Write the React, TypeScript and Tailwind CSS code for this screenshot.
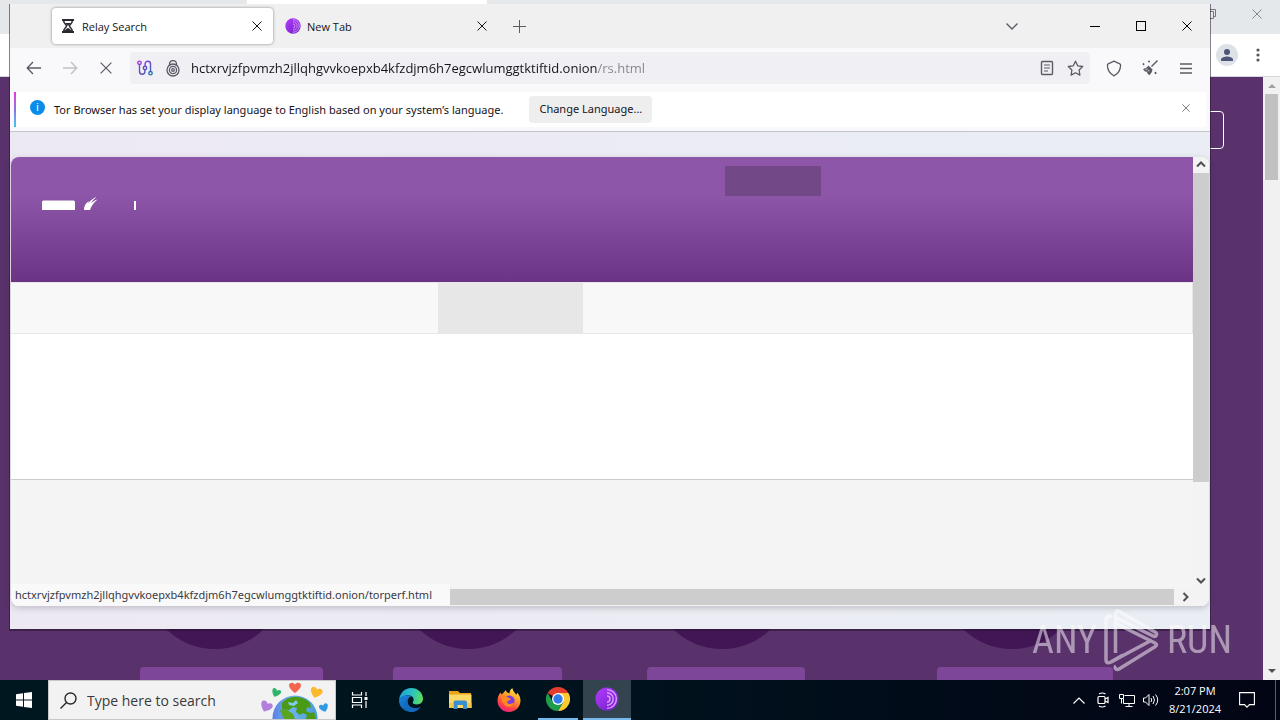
import type { ReactNode } from 'react';

const HOST = 'hctxrvjzfpvmzh2jllqhgvvkoepxb4kfzdjm6h7egcwlumggtktiftid.onion';

const cards = [
  { id: 1, column: 'w-[253px]', button: 'w-[183px]' },
  { id: 2, column: 'w-[254px]', button: 'w-[169px]' },
  { id: 3, column: 'w-[290px]', button: 'w-[158px]' },
  { id: 4, column: 'w-[176px]', button: 'w-[176px]' },
];

/* ---------- icons ---------- */

function Cross({ size = 10, width = 1 }: { size?: number; width?: number }) {
  return (
    <svg width={size} height={size} viewBox="0 0 10 10" fill="none" stroke="currentColor" strokeWidth={width}>
      <path d="M.5.5l9 9M9.5.5l-9 9" />
    </svg>
  );
}

function Chevron({ className = '', width = 2 }: { className?: string; width?: number }) {
  return (
    <svg width="10" height="10" viewBox="0 0 10 10" fill="none" stroke="currentColor" strokeWidth={width} className={className}>
      <path d="M1 6.5l4-4 4 4" />
    </svg>
  );
}

function Arrow({ className = '' }: { className?: string }) {
  return (
    <svg width="16" height="16" viewBox="0 0 16 16" fill="none" stroke="currentColor" strokeWidth="1.3" className={className}>
      <path d="M15 8H1.5M7 2L1.2 8 7 14" />
    </svg>
  );
}

function Hourglass() {
  return (
    <svg width="14" height="16" viewBox="0 0 14 16">
      <path d="M1 1h12v2H1zM1 13h12v2H1z" fill="#2b2a33" />
      <path d="M2.7 3c0 2.6 2.8 3.6 2.8 5s-2.8 2.4-2.8 5h8.6c0-2.6-2.8-3.6-2.8-5s2.8-2.4 2.8-5" fill="none" stroke="#2b2a33" strokeWidth="1.5" />
      <path d="M4 5h6L7 8zM4 13c0-2 3-3 3-3s3 1 3 3z" fill="#2b2a33" />
    </svg>
  );
}

function TorLogo({ size }: { size: number }) {
  return (
    <svg width={size} height={size} viewBox="0 0 24 24">
      <defs>
        <linearGradient id="torFill" x1="0" y1="0" x2="1" y2="1">
          <stop offset="0" stopColor="#b63bff" />
          <stop offset="1" stopColor="#6a1fc4" />
        </linearGradient>
      </defs>
      <circle cx="12" cy="12" r="11.5" fill="url(#torFill)" />
      <g fill="none" stroke="#dd9cff" strokeWidth="1.4">
        <path d="M12 2.6a9.4 9.4 0 0 1 0 18.8" />
        <path d="M12 5.8a6.2 6.2 0 0 1 0 12.4" />
        <path d="M12 9a3 3 0 0 1 0 6" />
      </g>
    </svg>
  );
}

function Circuit() {
  return (
    <svg width="16" height="16" viewBox="0 0 16 16" fill="none" strokeWidth="1.4">
      <defs>
        <linearGradient id="circuit" x1="0" y1="0" x2="16" y2="16" gradientUnits="userSpaceOnUse">
          <stop offset="0" stopColor="#b832e8" />
          <stop offset=".55" stopColor="#5a4fc0" />
          <stop offset="1" stopColor="#1884b8" />
        </linearGradient>
      </defs>
      <g stroke="url(#circuit)">
        <circle cx="2.5" cy="2.8" r="1.7" />
        <circle cx="8" cy="8" r="1.7" />
        <circle cx="13.5" cy="13.2" r="1.7" />
        <path d="M2.5 4.5v7a2.7 2.7 0 0 0 5.4 0V9.7M8.1 6.3V4a2.7 2.7 0 0 1 5.4 0v7.5" />
      </g>
    </svg>
  );
}

function OnionLock() {
  return (
    <svg width="14" height="17" viewBox="0 0 14 17" fill="none" stroke="#5b5b66" strokeWidth="1.3">
      <path d="M3.5 6V4a3.5 3.5 0 0 1 7 0v2" />
      <circle cx="7" cy="10" r="6" />
      <circle cx="7" cy="10" r="3.6" />
      <circle cx="7" cy="10" r="1.3" />
    </svg>
  );
}

function Reader() {
  return (
    <svg width="14" height="16" viewBox="0 0 14 16" fill="none" stroke="currentColor" strokeWidth="1.4">
      <rect x="1.5" y="1.5" width="11" height="13" rx="1" />
      <path d="M4 5h6M4 8h6M4 11h4" strokeWidth="1.1" />
    </svg>
  );
}

function Star() {
  return (
    <svg width="17" height="17" viewBox="0 0 17 17" fill="none" stroke="currentColor" strokeWidth="1.3" strokeLinejoin="round">
      <path d="M8.5 1.2l2.2 4.6 5 .7-3.6 3.5.8 5.1-4.4-2.4-4.4 2.4.8-5.1L1.3 6.5l5-.7z" />
    </svg>
  );
}

function Shield() {
  return (
    <svg width="16" height="17" viewBox="0 0 16 17" fill="none" stroke="currentColor" strokeWidth="1.3" strokeLinejoin="round">
      <path d="M8 1.2l5.8 2.6c.6.3.8.7.8 1.3C14.5 10 12 14 8 15.8 4 14 1.5 10 1.4 5.1c0-.6.2-1 .8-1.3z" />
    </svg>
  );
}

function Broom() {
  return (
    <svg width="16" height="16" viewBox="0 0 16 16" fill="none" stroke="currentColor">
      <path d="M15.5.5L9.5 6.5" strokeWidth="1.4" />
      <path d="M6.5 5.5l4 4c-.3 2.5-1.5 4.3-3.2 5.7L5.5 13.5l-.7-1.7-1.8-.2L1 9.2C3 8 4.7 8.3 6.5 5.5z" fill="currentColor" stroke="none" />
      <path d="M3.5 9.5l2-.5M6 11.5l1-1.5" stroke="#f9f9fb" strokeWidth=".8" />
      <path d="M7 .5v2M6 1.5h2M1.5 3.2v2M.5 4.2h2M13.5 11.8v2.4M12.3 13h2.4" strokeWidth="1" />
    </svg>
  );
}

function Heart({ x, y, turn, fill }: { x: number; y: number; turn: number; fill: string }) {
  return (
    <path
      d="M0 5C-3 3-6 0-6-2.7-6-5.5-2-6.5 0-3.5 2-6.5 6-5.5 6-2.7 6 0 3 3 0 5z"
      transform={`translate(${x} ${y}) rotate(${turn})`}
      fill={fill}
    />
  );
}

function SmallHeart({ x, y, turn, fill }: { x: number; y: number; turn: number; fill: string }) {
  return (
    <path
      d="M0 4C-2 3-4.5 0-4.5-2-4.5-4.5-1.5-5 0-2.5 1.5-5 4.5-4.5 4.5-2 4.5 0 2 3 0 4z"
      transform={`translate(${x} ${y}) rotate(${turn})`}
      fill={fill}
    />
  );
}

function EarthArt() {
  return (
    <svg width="70" height="38" viewBox="0 0 70 38" className="shrink-0">
      <defs>
        <linearGradient id="sea" x1="0" y1="0" x2="1" y2="0">
          <stop offset="0" stopColor="#5b7fe6" />
          <stop offset=".4" stopColor="#6db4ee" />
          <stop offset="1" stopColor="#4a9bd8" />
        </linearGradient>
      </defs>
      <circle cx="35" cy="37" r="22.5" fill="url(#sea)" />
      <path d="M22 22c4-5 10-7 16-6 5 .5 9 3 12 6l1 5-4-1-1 4 4 2 4-1 2 7H46l1-4-4-2-3 2-4-3 1-4-4-1-4 3-7-1z" fill="#4a9a16" />
      <path d="M20 29l6-1 7 5 2 5H24z" fill="#5aa51e" />
      <path d="M28 21l5 1 3-3 2 3-4 3-5-1z" fill="#83cbea" />
      <Heart x={35} y={7} turn={0} fill="#f4654f" />
      <SmallHeart x={16} y={12} turn={22} fill="#2fb56b" />
      <Heart x={56} y={12} turn={18} fill="#fdb92c" />
      <Heart x={6} y={26} turn={25} fill="#b180dc" />
      <SmallHeart x={64} y={27} turn={-18} fill="#2f9ae3" />
    </svg>
  );
}

function Edge() {
  return (
    <svg width="24" height="24" viewBox="0 0 24 24">
      <defs>
        <linearGradient id="edgeTop" x1="0" y1=".3" x2="1" y2=".5">
          <stop offset="0" stopColor="#1c9fe0" />
          <stop offset=".6" stopColor="#2fc6b5" />
          <stop offset="1" stopColor="#5fdc5a" />
        </linearGradient>
        <linearGradient id="edgeLow" x1="0" y1="0" x2="1" y2="1">
          <stop offset="0" stopColor="#1a86dc" />
          <stop offset="1" stopColor="#0c4f9e" />
        </linearGradient>
      </defs>
      <path d="M0 12.5C.5 5.3 5.5 0 12.2 0 19 0 24 5 24 10.8c0 3.5-2.7 5.7-6 5.7-2.8 0-4.3-1-4.3-2 0-.6 1-1.2 1-2.9 0-2.2-2.2-4.4-5.6-4.4C4.5 7.2 1 9.5 0 12.5z" fill="url(#edgeTop)" />
      <path d="M0 12.5c.9-3.1 4.3-5.3 8.9-5.3 1.5 0 2.8.4 3.8 1.1-3 .5-4.2 3-4.2 5.2 0 4.5 4.2 6.7 7.7 6.7 2 0 3.8-.5 5.3-1.5C19.5 22 16 24 12 24 5.3 24 0 18.8 0 12.5z" fill="url(#edgeLow)" />
      <path d="M8.5 13.5c0 4.5 4.2 6.7 7.7 6.7 2 0 3.8-.5 5.3-1.5-2.3 3.6-6.5 5.5-9.5 5.2-4-.9-6.5-5-6-9C6.5 12 8 9.5 12.7 8.3 9.7 8.8 8.5 11.3 8.5 13.5z" fill="#1469bd" />
    </svg>
  );
}

function Explorer() {
  return (
    <svg width="23" height="20" viewBox="0 0 23 20">
      <path d="M0 1h9l2 2h11v4H0z" fill="#e8a317" />
      <path d="M0 4.5h22.5V18H0z" fill="#fbd968" />
      <path d="M4.5 19v-6.5a2 2 0 0 1 2-2h9.5a2 2 0 0 1 2 2V19h-4v-4h-5.5v4z" fill="#3a8ed0" />
      <path d="M0 13h4.5v5H0zM18 13h4.5v5H18z" fill="#f3c648" />
    </svg>
  );
}

function Firefox() {
  return (
    <svg width="24" height="24" viewBox="0 0 24 24">
      <defs>
        <linearGradient id="foxFill" x1=".8" y1="0" x2=".3" y2="1">
          <stop offset="0" stopColor="#fff04a" />
          <stop offset=".4" stopColor="#ff9a2a" />
          <stop offset=".75" stopColor="#ff4340" />
          <stop offset="1" stopColor="#e8208b" />
        </linearGradient>
      </defs>
      <path d="M3.5 4.5c.3 1 .9 1.7 1.5 2.1C6 4.5 8 3.8 8.5 2c.8 2 2.2 3.2 4 3.2C12.5 3 13.5 1 15.5.2c.2 3 2.5 4.3 3.7 6.6.7-.7.8-1.5.8-2.3C22.5 7 23.5 10 23.5 12.5 23.5 19 18.4 24 12 24S.5 19 .5 12.7c0-3.2 1.2-6 3-8.2z" fill="url(#foxFill)" />
      <circle cx="12.3" cy="12.7" r="5.3" fill="#7b3de0" />
      <path d="M5 9.5c2-1.8 4.5-1.5 6 0 1 .8 2.5.7 2.8 1.5-.7 1.5-2.8 1.4-3.5 2.5-.4 1.7 1.7 3 3.7 2.3 1.8-.7 3-.5 3 0-1 2.5-4 3.500-6.500 2.900C6.500 17.600 4 13.500 5 9.500z" fill="#ff8a22" />
    </svg>
  );
}

function Chrome() {
  return (
    <svg width="24" height="24" viewBox="0 0 24 24">
      <path d="M12 12L1.6 6A12 12 0 0 1 22.4 6z" fill="#e33b2e" />
      <path d="M12 6h10.4A12 12 0 0 1 12 24l5.2-9z" fill="#fcc934" />
      <path d="M6.8 15L1.6 6A12 12 0 0 0 12 24l5.2-9z" fill="#1e9e4a" />
      <circle cx="12" cy="12" r="6" fill="#fff" />
      <circle cx="12" cy="12" r="4.7" fill="#2f7de9" />
    </svg>
  );
}

function TaskView() {
  return (
    <svg width="18" height="16" viewBox="0 0 18 16" fill="none" stroke="#fff" strokeWidth="1.2">
      <path d="M1.5 0v3h9V0M1.5 16v-3h9v3M1.5 5.5h9v5h-9zM15 0v4M15 9v7" />
      <path d="M13.5 5h3v3h-3z" fill="#fff" stroke="none" />
    </svg>
  );
}

function PlayMark() {
  return (
    <svg width="56" height="64" viewBox="0 0 56 64" fill="none" stroke="#fff" strokeWidth="3.5" strokeLinejoin="round">
      <path d="M11.5 45V5.5c0-2.5 1.5-3.5 3.5-2.3L51 24c3 2 1 5.5-2 4L13 10" />
      <path d="M8 8.5C4.5 7 2 8.5 2 11.5v40c0 3.5 2 4 5 2.5l12-7" />
      <path d="M13 16l38 19c2 1 2 2.5 0 3.8L15 61c-3 1.5-5-1.5-3-3M7 54l41-22" />
    </svg>
  );
}

/* ---------- pieces ---------- */

function IconButton({ label, className = '', children }: { label: string; className?: string; children: ReactNode }) {
  return (
    <button aria-label={label} className={`flex shrink-0 items-center justify-center ${className}`}>
      {children}
    </button>
  );
}

function TabBar() {
  return (
    <div className="flex h-11 items-center bg-[#f0f0f0] pl-[42px]">
      <div className="flex h-9 w-[221px] items-center rounded bg-white pr-1 pl-[9px] shadow-[0_0_3px_rgba(0,0,0,0.45)]">
        <Hourglass />
        <span className="ml-[7px] flex-1 pt-0.5 text-[11px]">Relay Search</span>
        <IconButton label="Close Relay Search" className="size-6">
          <Cross />
        </IconButton>
      </div>
      <div className="flex h-9 w-[225px] items-center pr-1 pl-3">
        <TorLogo size={16} />
        <span className="ml-[6px] flex-1 pt-0.5 text-[11px]">New Tab</span>
        <IconButton label="Close New Tab" className="size-6">
          <Cross />
        </IconButton>
      </div>
      <IconButton label="New tab" className="ml-[9px] size-6 text-[#5b5b66]">
        <svg width="13" height="13" viewBox="0 0 13 13" stroke="currentColor">
          <path d="M6.5 0v13M0 6.5h13" />
        </svg>
      </IconButton>
      <div className="flex-1" />
      <IconButton label="List all tabs" className="mr-[42px] size-9 text-[#5b5b66]">
        <svg width="12" height="7" viewBox="0 0 12 7" fill="none" stroke="currentColor" strokeWidth="1.4">
          <path d="M.5.5L6 6 11.5.5" />
        </svg>
      </IconButton>
      <IconButton label="Minimize" className="h-11 w-[46px]">
        <span className="h-px w-[10px] bg-black" />
      </IconButton>
      <IconButton label="Maximize" className="h-11 w-[46px]">
        <span className="size-[10px] border border-black" />
      </IconButton>
      <IconButton label="Close window" className="h-11 w-[46px] text-black">
        <Cross />
      </IconButton>
    </div>
  );
}

function NavBar() {
  return (
    <div className="flex h-10 items-center bg-[#f9f9fb] px-[6px] text-[#5b5b66]">
      <IconButton label="Back" className="h-8 w-9">
        <Arrow />
      </IconButton>
      <IconButton label="Forward" className="h-8 w-9 text-[#c0c0c6]">
        <Arrow className="rotate-180" />
      </IconButton>
      <IconButton label="Stop" className="h-8 w-9">
        <Cross size={12} />
      </IconButton>
      <div className="mx-[6px] flex h-8 min-w-0 flex-1 items-center rounded bg-[#f0f0f4] px-px">
        <IconButton label="Tor circuit" className="h-7 w-7">
          <Circuit />
        </IconButton>
        <IconButton label="Onion site" className="h-7 w-7">
          <OnionLock />
        </IconButton>
        <input
          aria-label="Address"
          defaultValue={`${HOST}/rs.html`}
          className="ml-1 min-w-0 flex-1 bg-[linear-gradient(90deg,#15141a_406px,#85848c_406px)] bg-clip-text pt-0.5 text-[13px] text-transparent outline-none"
        />
        <IconButton label="Reader view" className="h-7 w-7">
          <Reader />
        </IconButton>
        <IconButton label="Bookmark" className="h-7 w-7">
          <Star />
        </IconButton>
      </div>
      <IconButton label="Security level" className="h-8 w-9">
        <Shield />
      </IconButton>
      <IconButton label="New identity" className="h-8 w-9">
        <Broom />
      </IconButton>
      <IconButton label="Menu" className="h-8 w-9">
        <svg width="12" height="11" viewBox="0 0 12 11" stroke="currentColor">
          <path d="M0 1h12M0 5.5h12M0 10h12" strokeWidth="1.3" />
        </svg>
      </IconButton>
    </div>
  );
}

function LanguageNotice() {
  return (
    <div className="border-b border-[#c4c4cc] bg-[#f9f9fb] px-1 pt-1 pb-1">
      <div className="flex h-[35px] items-center rounded bg-white pr-[10px] font-['Noto_Sans',sans-serif]">
        <span className="h-full w-[2px] bg-linear-to-b from-[#e22fe0] via-[#8a6fe8] to-[#2cc4f0]" />
        <span className="mb-1 ml-[14px] flex size-[15px] items-center justify-center rounded-full bg-[#0a8ce8] text-[11px] text-white">
          i
        </span>
        <p className="ml-[9px] pt-0.5 text-[11px] text-[#15141a]">
          Tor Browser has set your display language to English based on your system’s language.
        </p>
        <button className="ml-[26px] h-[27px] rounded bg-[#eeeeef] px-[10px] text-[11px] whitespace-nowrap text-[#15141a]">Change Language...</button>
        <IconButton label="Dismiss" className="mb-1 ml-auto size-5 text-[#5b5b66]">
          <Cross size={8} />
        </IconButton>
      </div>
    </div>
  );
}

function MetricsPage() {
  return (
    <div className="flex min-h-0 flex-1 flex-col overflow-hidden rounded-lg bg-white shadow-[0_2px_6px_rgba(58,57,68,0.25)]">
      <div className="flex min-h-0 flex-1">
        <div className="flex min-w-0 flex-1 flex-col">
          <header className="flex h-[125px] bg-linear-to-b from-[#8d56a8] from-30% to-[#6c3385] pl-[31px]">
            <svg width="96" height="14" viewBox="0 0 96 14" fill="#fff" className="mt-10">
              <path d="M0 5Q0 3.5 1.5 3.5h30Q33 3.5 33 5V13H0z" />
              <path d="M42 13c0-4 1.5-7 5-9l-1 2.5C49 3 52 .5 54.5 0 51 3 50 4.5 49 6c2-1.5 4-3 6.5-3.5C51 6 49 10 48 13z" />
              <path d="M92 4h2v9h-2z" />
            </svg>
            <span className="mt-[9px] ml-[587px] h-[30px] w-24 bg-[#734886]" />
          </header>
          <nav aria-label="Metrics sections" className="flex h-[52px] border border-l-0 border-[#e7e7e7] bg-[#f8f8f8] pl-[427px]">
            <span className="h-full w-[145px] bg-[#e7e7e7]" />
          </nav>
          <main className="h-[145px]" />
          <footer className="flex-1 border-t border-[#ccc] bg-[#f4f4f4]" />
        </div>
        <div className="flex w-4 flex-col items-center bg-[#f3f3f3] text-[#505050]">
          <span className="flex h-4 items-center">
            <Chevron />
          </span>
          <span className="h-[309px] w-full bg-[#cdcdcd]" />
          <span className="mt-auto flex h-4 items-center">
            <Chevron className="rotate-180" />
          </span>
        </div>
      </div>
      <div className="flex h-[18px] items-center bg-[#f3f3f3] pr-[19px] text-[#505050]">
        <span className="h-4 flex-1 bg-[#cdcdcd]" />
        <Chevron className="ml-[6px] rotate-90" />
      </div>
    </div>
  );
}

function TorWindow() {
  return (
    <section
      aria-label="Tor Browser"
      className="absolute top-1 right-[70px] bottom-[51px] left-[10px] flex flex-col bg-linear-to-r from-[#ede9f3] to-[#eaeef4] text-[#15141a] shadow-[0_1px_0_1px_rgba(40,20,50,0.55)]"
    >
      <TabBar />
      <NavBar />
      <LanguageNotice />
      <div className="flex min-h-0 flex-1 flex-col px-px pt-[25px] pb-[23px]">
        <MetricsPage />
      </div>
      {/* link target shown over the lower scrollbar */}
      <p className="absolute bottom-[23px] left-px flex h-[22px] w-[439px] items-center rounded-bl-lg bg-[#f9f9fa] pl-1 font-['Noto_Sans',sans-serif] text-[11px] whitespace-nowrap text-[#3a3944]">
        {HOST}/torperf.html
      </p>
    </section>
  );
}

function ChromeWindow() {
  return (
    <section aria-label="Chrome" className="flex flex-1 flex-col">
      <div className="flex h-[34px] justify-end bg-[#e5e8eb] pl-[247px]">
        <span className="mr-auto h-full w-60 bg-white" />
        <IconButton label="Restore Chrome" className="h-7 w-[46px] text-[#777]">
          <svg width="10" height="10" viewBox="0 0 10 10" fill="none" stroke="currentColor">
            <path d="M.5 2.5h7v7h-7zM2.5 2.5v-2h7v7h-2" />
          </svg>
        </IconButton>
        <IconButton label="Close Chrome" className="h-7 w-[46px] text-[#888]">
          <Cross />
        </IconButton>
      </div>
      <div className="flex h-[43px] items-center justify-end gap-[18px] border-b border-[#d5d7dc] bg-white pr-5">
        <IconButton label="Profile" className="size-[22px] rounded-full bg-[#dfe1e8]">
          <svg width="14" height="14" viewBox="0 0 14 14" fill="#4c5478">
            <circle cx="7" cy="4" r="3" />
            <path d="M1 13v-1.5C1 9.5 5 8.5 7 8.5s6 1 6 3V13z" />
          </svg>
        </IconButton>
        <IconButton label="Chrome menu" className="w-1">
          <svg width="4" height="14" viewBox="0 0 4 14" fill="#55575c">
            <circle cx="2" cy="2" r="1.6" />
            <circle cx="2" cy="7" r="1.6" />
            <circle cx="2" cy="12" r="1.6" />
          </svg>
        </IconButton>
      </div>
      <div className="flex flex-1">
        <div className="flex min-w-0 flex-1 flex-col justify-between bg-[#59316b]">
          <span className="mt-[34px] mr-[39px] h-[38px] w-40 self-end rounded border border-white" />
          <div className="flex pl-[140px]">
            {cards.map((card) => (
              <div key={card.id} className={`shrink-0 ${card.column}`}>
                <div className="ml-[5px] size-[140px] rounded-full bg-[#421654]" />
                <div className={`mt-[18px] h-[13px] rounded-t bg-[#7d4698] ${card.button}`} />
              </div>
            ))}
          </div>
        </div>
        <div className="flex w-[17px] flex-col items-center bg-[#f1f1f1]">
          <svg width="8" height="17" viewBox="0 0 8 17" fill="#a0a0a0">
            <path d="M0 11l4-4 4 4z" />
          </svg>
          <span className="h-[86px] w-[13px] bg-[#c1c1c1]" />
          <svg width="8" height="17" viewBox="0 0 8 17" fill="#505050" className="mt-auto">
            <path d="M0 6l4 4 4-4z" />
          </svg>
        </div>
      </div>
    </section>
  );
}

function Taskbar() {
  return (
    <footer className="flex h-10 bg-linear-to-r from-[#00171f] via-[#00121d] to-[#020514] text-white">
      <IconButton label="Start" className="w-12">
        <svg width="16" height="16" viewBox="0 0 16 16" fill="#fff">
          <path d="M0 2.2L7 1.2v6.3H0zM8 1l8-1v7.5H8zM0 8.5h7v6.3l-7-1zM8 8.5h8V16l-8-1z" />
        </svg>
      </IconButton>
      <label className="flex w-72 items-center border border-[#c8c8c8] bg-[#f2f2f2] pr-[5px] pl-[11px] text-[#2a2a2a]">
        <svg width="17" height="17" viewBox="0 0 17 17" fill="none" stroke="currentColor" strokeWidth="1.4">
          <circle cx="10.5" cy="6.5" r="5.5" />
          <path d="M6.5 10.5L.5 16.5" />
        </svg>
        <input aria-label="Search" placeholder="Type here to search" className="ml-[10px] min-w-0 flex-1 text-[14px] outline-none placeholder:text-[#3a3a3a]" />
        <EarthArt />
      </label>
      <IconButton label="Task view" className="w-12">
        <TaskView />
      </IconButton>
      <div className="ml-[3px] flex gap-px">
        <IconButton label="Edge" className="w-12">
          <Edge />
        </IconButton>
        <IconButton label="File Explorer" className="w-12">
          <Explorer />
        </IconButton>
        <IconButton label="Firefox" className="w-12">
          <Firefox />
        </IconButton>
        <div className="flex w-12 px-1">
          <IconButton label="Google Chrome" className="flex-1 border-b-2 border-[#76b9ed]">
            <Chrome />
          </IconButton>
        </div>
        <IconButton label="Tor Browser" className="w-12 border-b-2 border-[#76b9ed] bg-[#33444f]">
          <TorLogo size={24} />
        </IconButton>
      </div>
      <div className="ml-auto flex">
        <IconButton label="Show hidden icons" className="w-6">
          <svg width="12" height="7" viewBox="0 0 12 7" fill="none" stroke="#fff" strokeWidth="1.2">
            <path d="M.5 6.5L6 1l5.5 5.5" />
          </svg>
        </IconButton>
        <IconButton label="Meet now" className="w-6">
          <svg width="12" height="16" viewBox="0 0 12 16" fill="none" stroke="#fff" strokeWidth="1.2">
            <rect x="1" y="4.5" width="7" height="7" rx="1" />
            <path d="M8 7l3-1.5v5L8 9M2 2Q5 0 8.5 2M2 14Q5 16 8.5 14" />
          </svg>
        </IconButton>
        <IconButton label="Network" className="w-6">
          <svg width="16" height="14" viewBox="0 0 16 14" fill="none" stroke="#fff">
            <path d="M5.5 2.5h10v8h-11V6M10 10.5v3M6.5 13.5h7M.5 1.5h4v4h-4zM2.5 5.5v5" />
          </svg>
        </IconButton>
        <IconButton label="Volume" className="w-6">
          <svg width="16" height="14" viewBox="0 0 16 14" fill="none" stroke="#fff">
            <path d="M.5 5h2L6 1.5v11L2.5 9h-2zM8 5q1.5 2 0 4M10 3q3 4 0 8M12.5 1.5q4.5 5.5 0 11" />
          </svg>
        </IconButton>
        <button className="w-16 text-center text-[11px] leading-[18px]">
          2:07 PM
          <br />
          8/21/2024
        </button>
        <IconButton label="Notifications" className="w-10">
          <svg width="16" height="16" viewBox="0 0 16 16" fill="none" stroke="#fff" strokeWidth="1.1">
            <path d="M.6.6h14.8v12H10.5L8 15.2 5.5 12.6H.6z" />
          </svg>
        </IconButton>
        <button aria-label="Show desktop" className="ml-2 w-[5px] border-l border-[#5a6070]" />
      </div>
    </footer>
  );
}

export default function App() {
  return (
    <div className="flex min-h-screen flex-col overflow-hidden font-['Open_Sans','Noto_Sans',sans-serif]">
      <div className="relative flex flex-1 flex-col">
        <ChromeWindow />
        <TorWindow />
        <div className="pointer-events-none absolute right-12 bottom-2 flex items-center gap-[7px] font-['Roboto_Condensed','Liberation_Sans',sans-serif] text-[38px] leading-none text-white opacity-50">
          <span>ANY</span>
          <PlayMark />
          <span>RUN</span>
        </div>
      </div>
      <Taskbar />
    </div>
  );
}
